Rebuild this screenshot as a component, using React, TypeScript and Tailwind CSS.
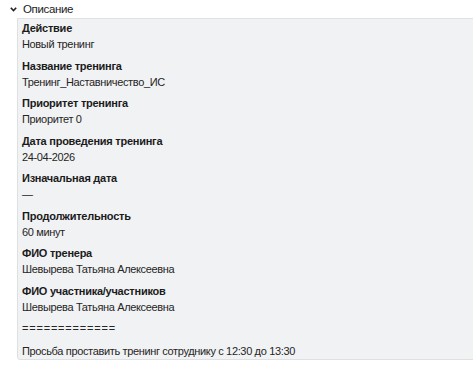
const FIELDS = [
  { label: "Действие", value: "Новый тренинг" },
  { label: "Название тренинга", value: "Тренинг_Наставничество_ИС" },
  { label: "Приоритет тренинга", value: "Приоритет 0" },
  { label: "Дата проведения тренинга", value: "24-04-2026" },
  { label: "Изначальная дата", value: "—" },
  { label: "Продолжительность", value: "60 минут" },
  { label: "ФИО тренера", value: "Шевырева Татьяна Алексеевна" },
  { label: "ФИО участника/участников", value: "Шевырева Татьяна Алексеевна" },
];

function Field({ label, value }: { label: string; value: string }) {
  return (
    <div className="flex flex-col">
      <div className="leading-4 font-bold text-[#1b1b1b] tracking-[-0.25px]">{label}</div>
      <div className="leading-4 text-[#252525]">{value}</div>
    </div>
  );
}

export default function App() {
  return (
    <div
      className="w-[473px] h-[377px] bg-white text-[11px] tracking-[-0.35px] overflow-hidden"
      style={{ fontFamily: '"Liberation Sans", Arial, sans-serif' }}
    >
      {/* Header */}
      <div className="flex items-center h-[18px] pl-[10px] gap-[6px]">
        <svg width="7" height="5" viewBox="0 0 7 5" className="mt-[1px]">
          <path d="M0.8 0.8 L3.5 3.6 L6.2 0.8" fill="none" stroke="#222" strokeWidth="1.6" />
        </svg>
        <span className="text-[#222] leading-4 text-[11.5px]">Описание</span>
      </div>

      {/* Panel */}
      <div className="ml-[17px] -mr-[4px] h-[342px] bg-[#f1f2f4] border border-[#dfe0e2] rounded-b-[3px] pl-[4px] pt-[1px] flex flex-col">
        <div className="flex flex-col gap-[5.5px]">
          {FIELDS.map((f, i) => (
            <Field key={i} {...f} />
          ))}
        </div>
        <div className="leading-4 text-[#252525] mt-[5px] tracking-[0.8px]">=============</div>
        <div className="leading-4 text-[#252525] mt-[7px]">
          Просьба проставить тренинг сотруднику с 12:30 до 13:30
        </div>
      </div>
    </div>
  );
}
